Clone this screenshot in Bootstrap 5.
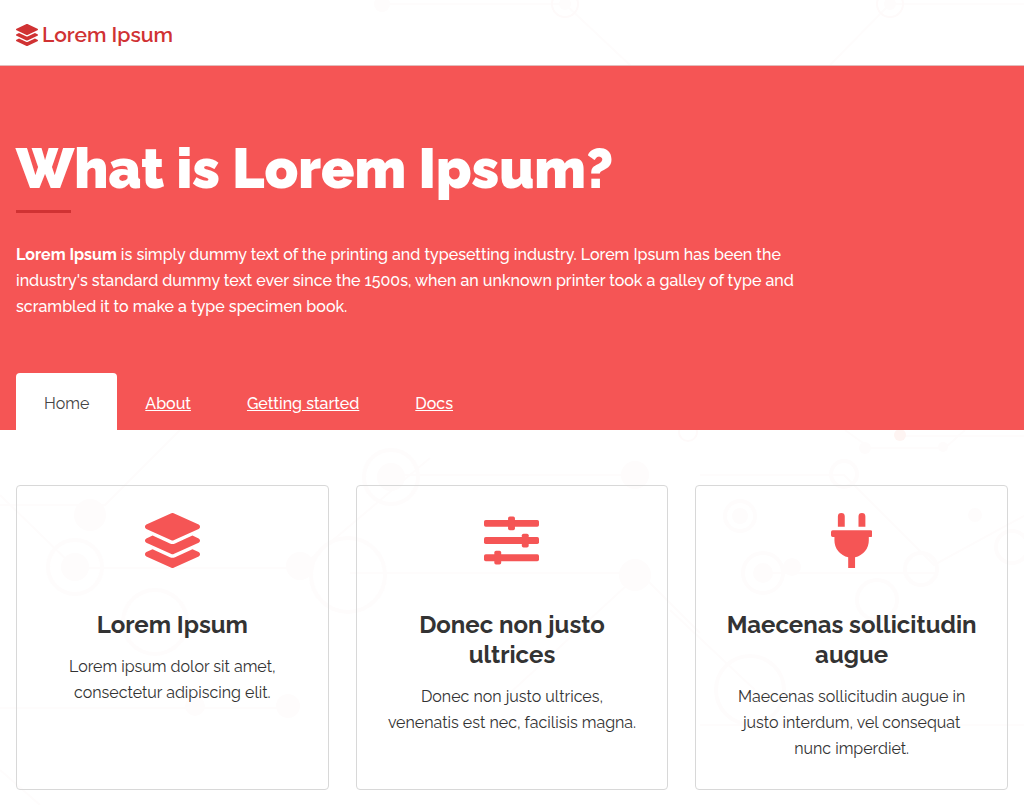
<!DOCTYPE html>
<html lang="en">
<head>
<meta charset="utf-8">
<meta name="viewport" content="width=device-width, initial-scale=1">
<title>Lorem Ipsum</title>
<link rel="stylesheet" href="https://cdn.jsdelivr.net/npm/bootstrap@5.3.0/dist/css/bootstrap.min.css">
<style>
  body {
    --brand: #f55555;
    --brand-dark: #d03233;
    font-family: Raleway, Lato, sans-serif;
    font-size: 16px;
    line-height: 26px;
    color: #333;
  }
  .page-wrap { padding-left: 16px; padding-right: 16px; }
  .site-bar { border-bottom: 1px solid #e3bcbc; padding: 20px 0 16px; }
  .site-bar .navbar-brand { color: var(--brand-dark); font-size: 21px; line-height: 29px; font-weight: 600; gap: 4px; padding: 0; }
  .brand-icon { width: 22px; height: 22px; }
  .hero { background: var(--brand); color: #fff; padding-top: 69px; font-weight: 500; }
  .hero h1 { font-size: 55px; line-height: 68px; font-weight: 900; margin: 0; }
  .hero-rule { width: 55px; height: 3px; background: var(--brand-dark); margin: 7px 0 29px; }
  .hero-text { max-width: 800px; margin-bottom: 53px; }
  .hero-text strong { font-weight: 700; }
  .hero .nav-tabs { --bs-nav-tabs-border-width: 0; --bs-nav-tabs-border-radius: 4px; --bs-nav-link-padding-x: 28px; --bs-nav-link-padding-y: 0; }
  .hero .nav-link { color: #fff; line-height: 26px; padding-top: 18px; padding-bottom: 13px; text-decoration: underline; }
  .hero .nav-link.active { color: #444; background: #fff; text-decoration: none; font-weight: 400; }
  .features { padding-top: 55px; padding-bottom: 15px; }
  .features .row { --bs-gutter-x: 27px; --bs-gutter-y: 27px; }
  .feature { border: 1px solid #d8d8d8; border-radius: 4px; background: transparent; padding: 27px; text-align: center; }
  .feature-icon { height: 55px; color: var(--brand); margin-bottom: 42px; }
  .feature h2 { font-size: 24px; line-height: 30px; font-weight: 700; color: #333; margin-bottom: 14px; }
  .backdrop { z-index: -1; }
</style>
</head>
<body>
<svg class="backdrop position-absolute top-0 start-0 w-100 h-100" viewBox="0 0 1024 805" preserveAspectRatio="xMidYMin slice" fill="none" stroke="#fefcfc" stroke-width="2" aria-hidden="true">
  <path d="M382 4h183l66 62M890 4h134M890 4l-60 61M180 430l-75 75H0M0 495l75 73h225l130-110M390 475h245M700 475h144l90 90 110-60M350 573h290l60 60M765 573h170M640 573l-130 120M900 436h124M845 430l25 18h75l20-18M0 708h290M0 770l40 35M670 610l85 80M700 725h324"/>
  <g stroke="#fefafa">
    <circle cx="565" cy="4" r="13"/><circle cx="890" cy="4" r="13"/>
    <circle cx="688" cy="432" r="9"/>
  </g>
  <g stroke-width="4">
    <circle cx="391" cy="477" r="27"/><circle cx="75" cy="567" r="27"/><circle cx="155" cy="622" r="32"/>
    <circle cx="348" cy="575" r="37"/><circle cx="750" cy="690" r="34"/>
    <circle cx="740" cy="516" r="15"/><circle cx="763" cy="573" r="20"/><circle cx="877" cy="600" r="20"/>
    <circle cx="921" cy="569" r="16"/><circle cx="844" cy="474" r="13"/><circle cx="1012" cy="547" r="16"/>
  </g>
  <g fill="#fefcfc" stroke="none">
    <circle cx="382" cy="4" r="8"/><circle cx="565" cy="4" r="6"/><circle cx="890" cy="4" r="6"/>
    <circle cx="391" cy="477" r="14"/><circle cx="75" cy="567" r="14"/><circle cx="90" cy="515" r="16"/>
    <circle cx="300" cy="566" r="14"/><circle cx="635" cy="475" r="14"/><circle cx="900" cy="435" r="6" fill="#fef4f2"/>
    <circle cx="865" cy="448" r="6"/><circle cx="943" cy="447" r="5"/><circle cx="635" cy="575" r="16"/>
    <circle cx="763" cy="573" r="10"/><circle cx="792" cy="567" r="9"/><circle cx="740" cy="516" r="8"/>
    <circle cx="195" cy="706" r="10"/><circle cx="288" cy="706" r="12"/><circle cx="975" cy="515" r="7"/>
  </g>
</svg>

<svg class="d-none" aria-hidden="true">
  <symbol id="layers" viewBox="0 0 512 512"><path fill="currentColor" d="M12.41 148.02l232.94 105.67c6.8 3.09 14.49 3.09 21.29 0l232.94-105.67c16.55-7.51 16.55-32.52 0-40.03L266.65 2.31a25.607 25.607 0 0 0-21.29 0L12.41 107.98c-16.55 7.51-16.55 32.53 0 40.04zm487.18 88.28l-58.09-26.33-161.64 73.27c-7.56 3.43-15.59 5.17-23.86 5.17s-16.29-1.74-23.86-5.17L70.51 209.97l-58.1 26.33c-16.55 7.5-16.55 32.5 0 40l232.94 105.59c6.8 3.08 14.49 3.08 21.29 0L499.59 276.3c16.55-7.5 16.55-32.5 0-40zm0 127.8l-57.87-26.23-161.86 73.37c-7.56 3.43-15.59 5.17-23.86 5.17s-16.29-1.74-23.86-5.17L70.29 337.87 12.41 364.1c-16.55 7.5-16.55 32.5 0 40l232.94 105.59c6.8 3.08 14.49 3.08 21.29 0L499.59 404.1c16.55-7.5 16.55-32.5 0-40z"/></symbol>
</svg>

<header class="navbar site-bar">
  <div class="container-fluid page-wrap">
    <a class="navbar-brand d-flex align-items-center m-0" href="#">
      <svg class="brand-icon" aria-hidden="true"><use href="#layers"/></svg>
      <span>Lorem Ipsum</span>
    </a>
  </div>
</header>

<section class="hero">
  <div class="container-fluid page-wrap">
    <h1>What is Lorem Ipsum?</h1>
    <div class="hero-rule"></div>
    <p class="hero-text"><strong>Lorem Ipsum</strong> is simply dummy text of the printing and typesetting industry. Lorem Ipsum has been the industry's standard dummy text ever since the 1500s, when an unknown printer took a galley of type and scrambled it to make a type specimen book.</p>
    <nav class="nav nav-tabs" aria-label="Main">
      <a class="nav-link active" aria-current="page" href="#">Home</a>
      <a class="nav-link" href="#">About</a>
      <a class="nav-link" href="#">Getting started</a>
      <a class="nav-link" href="#">Docs</a>
    </nav>
  </div>
</section>

<main class="container-fluid page-wrap features">
  <div class="row row-cols-1 row-cols-md-3">
    <div class="col">
      <article class="feature h-100">
        <svg class="feature-icon" viewBox="0 0 512 512" aria-hidden="true"><use href="#layers"/></svg>
        <h2>Lorem Ipsum</h2>
        <p class="mb-0">Lorem ipsum dolor sit amet, consectetur adipiscing elit.</p>
      </article>
    </div>
    <div class="col">
      <article class="feature h-100">
        <svg class="feature-icon" viewBox="0 0 512 512" fill="currentColor" aria-hidden="true">
          <rect y="64" width="512" height="64" rx="16"/><rect x="224" y="32" width="64" height="128" rx="16"/>
          <rect y="224" width="512" height="64" rx="16"/><rect x="352" y="192" width="64" height="128" rx="16"/>
          <rect y="384" width="512" height="64" rx="16"/><rect x="96" y="352" width="64" height="128" rx="16"/>
        </svg>
        <h2>Donec non justo ultrices</h2>
        <p class="mb-0">Donec non justo ultrices, venenatis est nec, facilisis magna.</p>
      </article>
    </div>
    <div class="col">
      <article class="feature h-100">
        <svg class="feature-icon" viewBox="0 0 384 512" fill="currentColor" aria-hidden="true"><path d="M320 32a32 32 0 0 0-64 0v96h64zm48 128H16A16 16 0 0 0 0 176v32a16 16 0 0 0 16 16h16v32a160.07 160.07 0 0 0 128 156.8V512h64v-99.2A160.07 160.07 0 0 0 352 256v-32h16a16 16 0 0 0 16-16v-32a16 16 0 0 0-16-16zM128 32a32 32 0 0 0-64 0v96h64z"/></svg>
        <h2>Maecenas sollicitudin augue</h2>
        <p class="mb-0">Maecenas sollicitudin augue in justo interdum, vel consequat nunc imperdiet.</p>
      </article>
    </div>
  </div>
</main>
<script src="https://cdn.jsdelivr.net/npm/bootstrap@5.3.0/dist/js/bootstrap.bundle.min.js"></script>
</body>
</html>
